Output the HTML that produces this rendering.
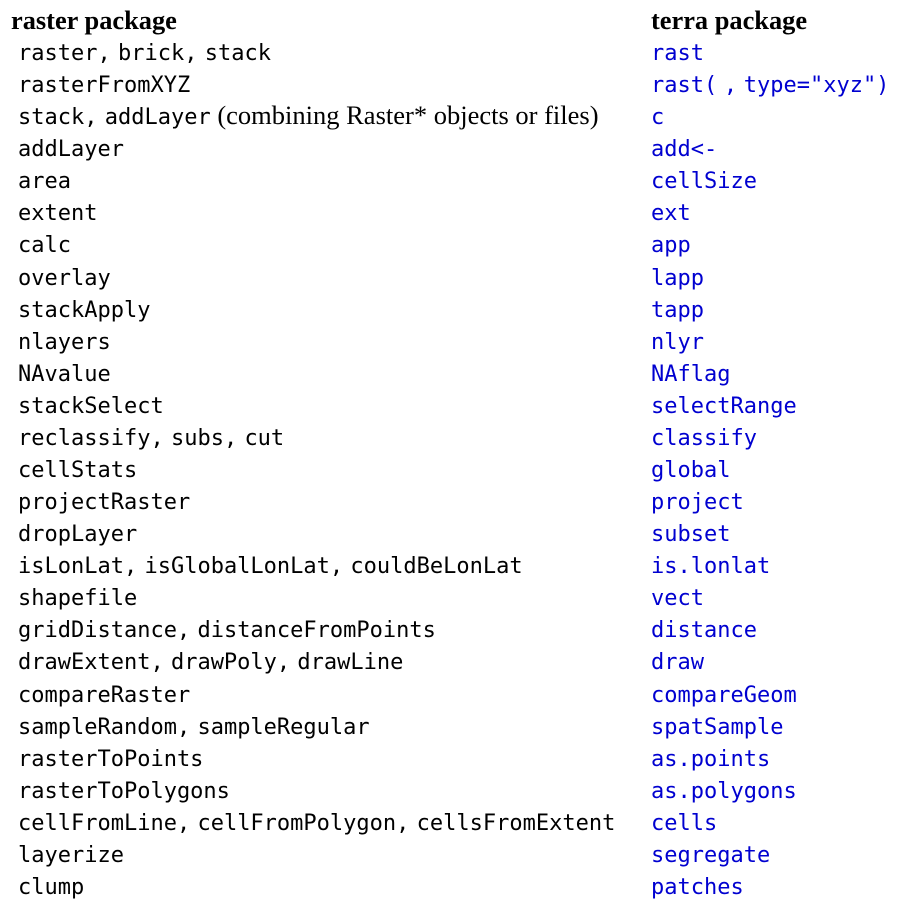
<!DOCTYPE html>
<html><head><meta charset="utf-8"><style>
body{margin:0;width:912px;height:916px;background:#fff;position:relative;overflow:hidden}
.h{position:absolute;top:5px;font:bold 26.4px "Liberation Serif",serif;color:#000}
.col{position:absolute;top:38px}
.col div{height:32.08px;font:22px/32px "DejaVu Sans Mono",monospace;white-space:nowrap}
.s{font:26.5px/0 "Liberation Serif",serif}
.c{letter-spacing:-3px}
.b div{color:#0000d0}
</style></head><body>
<div class="h" style="left:11px">raster package</div>
<div class="h" style="left:651px">terra package</div>
<div class="col" style="left:18px">
<div>raster<span class="c">, </span>brick<span class="c">, </span>stack</div>
<div>rasterFromXYZ</div>
<div>stack<span class="c">, </span>addLayer<span class="s"> (combining Raster* objects or files)</span></div>
<div>addLayer</div><div>area</div><div>extent</div><div>calc</div><div>overlay</div><div>stackApply</div><div>nlayers</div><div>NAvalue</div><div>stackSelect</div>
<div>reclassify<span class="c">, </span>subs<span class="c">, </span>cut</div>
<div>cellStats</div><div>projectRaster</div><div>dropLayer</div>
<div>isLonLat<span class="c">, </span>isGlobalLonLat<span class="c">, </span>couldBeLonLat</div>
<div>shapefile</div>
<div>gridDistance<span class="c">, </span>distanceFromPoints</div>
<div>drawExtent<span class="c">, </span>drawPoly<span class="c">, </span>drawLine</div>
<div>compareRaster</div>
<div>sampleRandom<span class="c">, </span>sampleRegular</div>
<div>rasterToPoints</div><div>rasterToPolygons</div>
<div>cellFromLine<span class="c">, </span>cellFromPolygon<span class="c">, </span>cellsFromExtent</div>
<div>layerize</div><div>clump</div>
</div>
<div class="col b" style="left:651px">
<div>rast</div><div>rast(<span class="s"> </span>,<span class="s"> </span>type="xyz")</div><div>c</div><div>add&lt;-</div><div>cellSize</div><div>ext</div><div>app</div><div>lapp</div><div>tapp</div><div>nlyr</div><div>NAflag</div><div>selectRange</div><div>classify</div><div>global</div><div>project</div><div>subset</div><div>is.lonlat</div><div>vect</div><div>distance</div><div>draw</div><div>compareGeom</div><div>spatSample</div><div>as.points</div><div>as.polygons</div><div>cells</div><div>segregate</div><div>patches</div>
</div>
</body></html>
